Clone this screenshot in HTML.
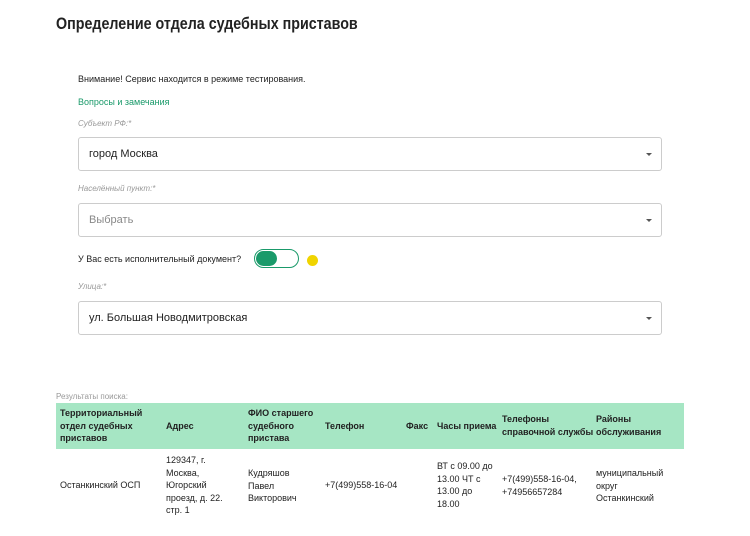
<!DOCTYPE html>
<html><head><meta charset="utf-8"><style>
*{margin:0;padding:0;box-sizing:border-box}
body{width:750px;height:536px;background:#fff;font-family:"Liberation Sans","Noto Sans CJK SC",sans-serif;color:#222;position:relative;overflow:hidden}
.a{position:absolute;white-space:nowrap}
.sel{position:absolute;left:78px;width:584px;height:34px;border:1px solid #ccc;border-radius:3px;font-size:11px;padding-left:10px;line-height:32px}
.sel:after{content:"";position:absolute;right:9px;top:15px;border:3px solid transparent;border-top:3px solid #555}
.lbl{font-size:8px;color:#999;font-style:italic}
.th{position:absolute;font-size:9px;font-weight:bold;line-height:12.5px;color:#222}
.td{position:absolute;font-size:9px;line-height:12.5px;color:#222}
</style></head><body>
<div class="a" style="left:56px;top:14px;font-size:17px;font-weight:bold;color:#222;transform:scaleX(0.84);transform-origin:left">Определение отдела судебных приставов</div>
<div class="a" style="left:78px;top:74px;font-size:9px">Внимание! Сервис находится в режиме тестирования.</div>
<div class="a" style="left:78px;top:97px;font-size:9px;color:#1a9a6a">Вопросы и замечания</div>
<div class="a lbl" style="left:78px;top:119px">Субъект РФ:*</div>
<div class="sel" style="top:137px">город Москва</div>
<div class="a lbl" style="left:78px;top:184px">Населённый пункт:*</div>
<div class="sel" style="top:203px;color:#888">Выбрать</div>
<div class="a" style="left:78px;top:254px;font-size:9px">У Вас есть исполнительный документ?</div>
<div class="a" style="left:254px;top:249px;width:45px;height:19px;border:1px solid #1a9a6a;border-radius:10px"></div>
<div class="a" style="left:256px;top:251px;width:21px;height:15px;background:#1a9a6a;border-radius:8px"></div>
<div class="a" style="left:307px;top:255px;width:11px;height:11px;background:#f0d400;border-radius:50%"></div>
<div class="a lbl" style="left:78px;top:282px">Улица:*</div>
<div class="sel" style="top:301px">ул. Большая Новодмитровская</div>
<div class="a" style="left:56px;top:392px;font-size:8px;color:#999">Результаты поиска:</div>
<div class="a" style="left:56px;top:403px;width:628px;height:46px;background:#a6e6c4"></div>
<div class="th" style="left:60px;top:407px">Территориальный<br>отдел судебных<br>приставов</div>
<div class="th" style="left:166px;top:420px">Адрес</div>
<div class="th" style="left:248px;top:407px">ФИО старшего<br>судебного<br>пристава</div>
<div class="th" style="left:325px;top:420px">Телефон</div>
<div class="th" style="left:406px;top:420px">Факс</div>
<div class="th" style="left:437px;top:420px">Часы приема</div>
<div class="th" style="left:502px;top:413px">Телефоны<br>справочной службы</div>
<div class="th" style="left:596px;top:413px">Районы<br>обслуживания</div>
<div class="td" style="left:60px;top:479px">Останкинский ОСП</div>
<div class="td" style="left:166px;top:454px">129347, г.<br>Москва,<br>Югорский<br>проезд, д. 22.<br>стр. 1</div>
<div class="td" style="left:248px;top:467px">Кудряшов<br>Павел<br>Викторович</div>
<div class="td" style="left:325px;top:479px">+7(499)558-16-04</div>
<div class="td" style="left:437px;top:460px">ВТ с 09.00 до<br>13.00 ЧТ с<br>13.00 до<br>18.00</div>
<div class="td" style="left:502px;top:473px">+7(499)558-16-04,<br>+74956657284</div>
<div class="td" style="left:596px;top:467px">муниципальный<br>округ<br>Останкинский</div>
</body></html>
